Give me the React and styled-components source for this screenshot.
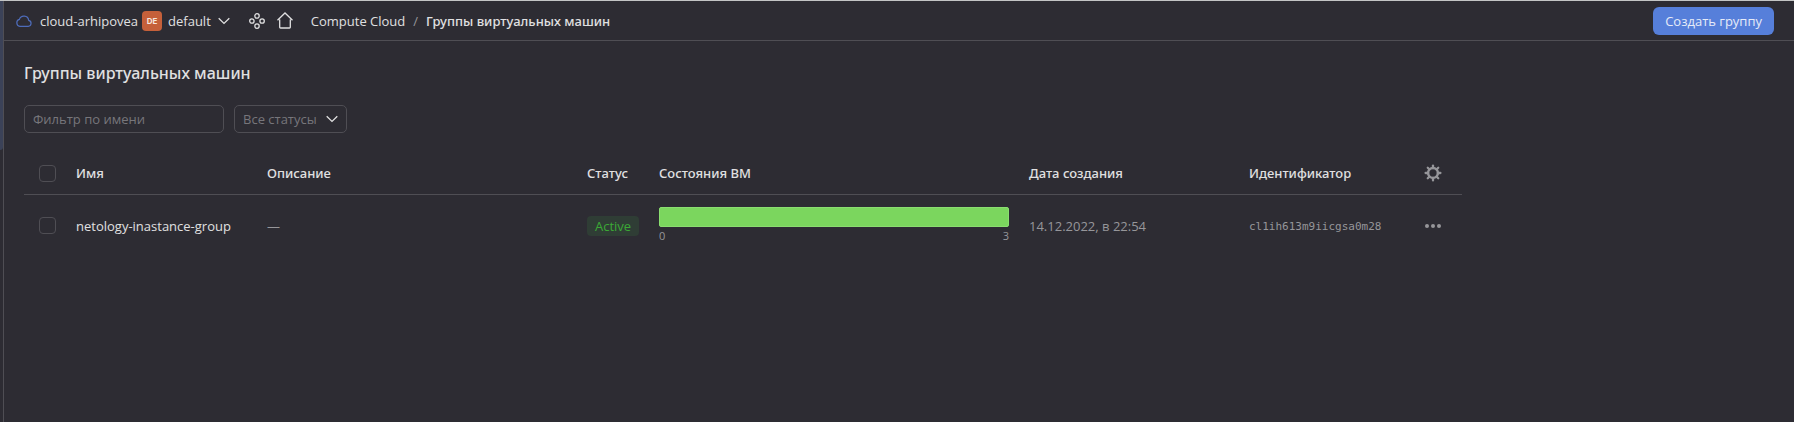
import React from 'react';
import styled, { createGlobalStyle, css } from 'styled-components';

const c = {
  bg: '#2d2c33',
  line: '#4f4e54',
  text: '#e0e0e1',
  muted: '#96969a',
  hint: '#77767b',
  accent: '#567fda',
};

const GlobalStyle = createGlobalStyle`
  *, *::before, *::after { box-sizing: border-box; }
  html, body { margin: 0; background: ${c.bg}; }
  body {
    color: ${c.text};
    font: 400 13px/18px "Open Sans", "Noto Sans", sans-serif;
  }
  button, input, select { font: inherit; color: inherit; margin: 0; }
`;

const strong = css`
  font-family: "Noto Sans", "Open Sans", sans-serif;
  font-weight: 500;
`;

const Shell = styled.div`
  display: flex;
  min-height: 100vh;
  border-top: 1px solid #c3c5c5;
  background: ${c.bg};
`;

const Rail = styled.aside`
  flex: none;
  width: 4px;
  border-right: 1px solid ${c.line};
`;

const RailMark = styled.div`
  height: 149px;
  background: #3b4258;
  border-bottom-right-radius: 3px;
`;

const Page = styled.div`
  flex: 1;
  min-width: 0;
`;

const Header = styled.header`
  display: flex;
  align-items: center;
  justify-content: space-between;
  height: 40px;
  padding: 0 20px 0 12px;
  border-bottom: 1px solid ${c.line};
`;

const HeaderGroup = styled.div`
  display: flex;
  align-items: center;
  white-space: nowrap;
`;

const PlainLink = styled.a`
  display: inline-flex;
  align-items: center;
  gap: 8px;
  color: inherit;
  text-decoration: none;
`;

const FolderButton = styled.button`
  display: flex;
  align-items: center;
  gap: 6px;
  margin-left: 4px;
  padding: 0;
  border: 0;
  background: none;
`;

const FolderBadge = styled.span`
  width: 20px;
  height: 20px;
  border-radius: 4px;
  background: #c5603a;
  color: #f6e6df;
  font-family: Inter, sans-serif;
  font-size: 8px;
  line-height: 20px;
  font-weight: 700;
  text-align: center;
`;

const Shortcuts = styled.nav`
  display: flex;
  gap: 12px;
  margin-left: 18px;
`;

const Breadcrumbs = styled.nav`
  display: flex;
  gap: 8px;
  margin-left: 18px;
`;

const Slash = styled.span`
  color: ${c.muted};
`;

const Current = styled.span`
  ${strong}
`;

const PrimaryButton = styled.button`
  height: 28px;
  padding: 0 12px;
  border: 0;
  border-radius: 6px;
  background: ${c.accent};
  color: #e6ebf8;
  white-space: nowrap;
`;

const Main = styled.main`
  padding: 20px;
`;

const Title = styled.h1`
  ${strong}
  margin: 0;
  font-size: 16px;
  line-height: 24px;
`;

const Filters = styled.form`
  display: flex;
  gap: 10px;
  margin: 20px 0;
`;

const field = css`
  height: 28px;
  border: 1px solid ${c.line};
  border-radius: 5px;
  background: transparent;
`;

const TextField = styled.input`
  ${field}
  width: 200px;
  padding: 0 8px;
  &::placeholder { color: ${c.hint}; opacity: 1; }
`;

const SelectBox = styled.div`
  display: grid;
  align-items: center;
  > * { grid-area: 1 / 1; }
  > svg { justify-self: end; margin-right: 8px; pointer-events: none; }
`;

const Select = styled.select`
  ${field}
  width: 113px;
  padding: 0 8px;
  appearance: none;
  color: ${c.hint};
`;

const TableScroll = styled.div`
  overflow-x: auto;
`;

const Table = styled.table`
  width: 1438px;
  table-layout: fixed;
  border-collapse: collapse;
`;

const Col = styled.col`
  width: ${(p) => p.$w}px;
`;

const HeadCell = styled.th`
  ${strong}
  height: 41px;
  padding: 0 10px;
  border-bottom: 1px solid ${c.line};
  text-align: left;
  white-space: nowrap;
`;

const Cell = styled.td`
  height: 63px;
  padding: 0 10px;
  color: ${(p) => (p.$primary ? c.text : c.muted)};
  white-space: nowrap;
`;

const Checkbox = styled.input`
  appearance: none;
  display: block;
  width: 17px;
  height: 17px;
  margin: 0 0 0 5px;
  border: 1px solid ${c.line};
  border-radius: 4px;
  &:checked { background: ${c.accent}; }
`;

const Status = styled.span`
  display: inline-block;
  padding: 0 8px;
  border-radius: 4px;
  background: #2f3d35;
  color: #3ba935;
  line-height: 20px;
`;

const ProgressBar = styled.div`
  height: 20px;
  border: 1px solid #8ade70;
  border-radius: 2px;
  background: #7bd65e;
`;

const Scale = styled.div`
  display: flex;
  justify-content: space-between;
  font-size: 11px;
  line-height: 18px;
`;

const Mono = styled.span`
  font: 11px/18px "DejaVu Sans Mono", monospace;
`;

const IconButton = styled.button`
  display: flex;
  padding: 0;
  border: 0;
  background: none;
  color: ${c.muted};
`;

const CloudIcon = () => (
  <svg width="16" height="14" viewBox="0 0 16 14" fill="none" stroke="#4e6cba" strokeWidth="1.2">
    <path d="M3.8 12.4h8.4a3.1 3.1 0 0 0 .5-6.1A4.8 4.8 0 0 0 3.4 5.4 3.6 3.6 0 0 0 3.8 12.4z" />
  </svg>
);

const Chevron = () => (
  <svg width="14" height="8" viewBox="0 0 14 8" fill="none" stroke={c.text} strokeWidth="1.3">
    <path d="M1.7 1.2 7 6.4l5.3-5.2" />
  </svg>
);

const ServicesIcon = () => (
  <svg width="16" height="16" viewBox="0 0 16 16" fill="none" stroke={c.text} strokeWidth="1.3">
    <circle cx="8" cy="2.9" r="2.2" />
    <circle cx="2.9" cy="8" r="2.2" />
    <circle cx="13.1" cy="8" r="2.2" />
    <circle cx="8" cy="13.1" r="2.2" />
  </svg>
);

const HomeIcon = () => (
  <svg width="16" height="17" viewBox="0 0 16 17" fill="none" stroke={c.text} strokeWidth="1.3">
    <path d="M.5 8.3 8 1l7.5 7.3M2.7 7.6v7.6q0 .8.8.8h9q.8 0 .8-.8V7.6" />
  </svg>
);

const GearIcon = () => (
  <svg width="18" height="18" viewBox="0 0 18 18" fill="none" stroke="currentColor">
    <circle cx="9" cy="9" r="4.9" strokeWidth="2.5" />
    {[0, 45, 90, 135, 180, 225, 270, 315].map((a) => (
      <path
        key={a}
        d="M9 4V1.6"
        strokeWidth="2.3"
        strokeLinecap="round"
        transform={`rotate(${a} 9 9)`}
      />
    ))}
  </svg>
);

const DotsIcon = () => (
  <svg width="18" height="18" viewBox="0 0 18 18" fill="currentColor">
    <circle cx="3" cy="9" r="2" />
    <circle cx="9" cy="9" r="2" />
    <circle cx="15" cy="9" r="2" />
  </svg>
);

const columns = [42, 191, 320, 72, 370, 220, 175, 48];
const groups = [
  {
    name: 'netology-inastance-group',
    description: '—',
    status: 'Active',
    min: 0,
    max: 3,
    created: '14.12.2022, в 22:54',
    id: 'cl1ih613m9iicgsa0m28',
  },
];

export default function App() {
  return (
    <>
      <GlobalStyle />
      <Shell>
        <Rail><RailMark /></Rail>
        <Page>
          <Header>
            <HeaderGroup>
              <PlainLink href="#cloud"><CloudIcon />cloud-arhipovea</PlainLink>
              <FolderButton type="button">
                <FolderBadge>DE</FolderBadge>
                default
                <Chevron />
              </FolderButton>
              <Shortcuts>
                <PlainLink href="#services" aria-label="Сервисы"><ServicesIcon /></PlainLink>
                <PlainLink href="#home" aria-label="Главная"><HomeIcon /></PlainLink>
              </Shortcuts>
              <Breadcrumbs>
                <PlainLink href="#compute">Compute Cloud</PlainLink>
                <Slash>/</Slash>
                <Current>Группы виртуальных машин</Current>
              </Breadcrumbs>
            </HeaderGroup>
            <PrimaryButton type="button">Создать группу</PrimaryButton>
          </Header>
          <Main>
            <Title>Группы виртуальных машин</Title>
            <Filters>
              <TextField type="text" placeholder="Фильтр по имени" aria-label="Фильтр по имени" />
              <SelectBox>
                <Select aria-label="Статус" defaultValue="all">
                  <option value="all">Все статусы</option>
                </Select>
                <Chevron />
              </SelectBox>
            </Filters>
            <TableScroll>
              <Table>
                <colgroup>{columns.map((w, i) => <Col key={i} $w={w} />)}</colgroup>
                <thead>
                  <tr>
                    <HeadCell><Checkbox type="checkbox" aria-label="Выбрать все" /></HeadCell>
                    <HeadCell>Имя</HeadCell>
                    <HeadCell>Описание</HeadCell>
                    <HeadCell>Статус</HeadCell>
                    <HeadCell>Состояния ВМ</HeadCell>
                    <HeadCell>Дата создания</HeadCell>
                    <HeadCell>Идентификатор</HeadCell>
                    <HeadCell>
                      <IconButton type="button" aria-label="Настройки"><GearIcon /></IconButton>
                    </HeadCell>
                  </tr>
                </thead>
                <tbody>
                  {groups.map((g) => (
                    <tr key={g.id}>
                      <Cell><Checkbox type="checkbox" aria-label={g.name} /></Cell>
                      <Cell $primary>{g.name}</Cell>
                      <Cell>{g.description}</Cell>
                      <Cell><Status>{g.status}</Status></Cell>
                      <Cell>
                        <ProgressBar />
                        <Scale><span>{g.min}</span><span>{g.max}</span></Scale>
                      </Cell>
                      <Cell>{g.created}</Cell>
                      <Cell><Mono>{g.id}</Mono></Cell>
                      <Cell>
                        <IconButton type="button" aria-label="Действия"><DotsIcon /></IconButton>
                      </Cell>
                    </tr>
                  ))}
                </tbody>
              </Table>
            </TableScroll>
          </Main>
        </Page>
      </Shell>
    </>
  );
}
